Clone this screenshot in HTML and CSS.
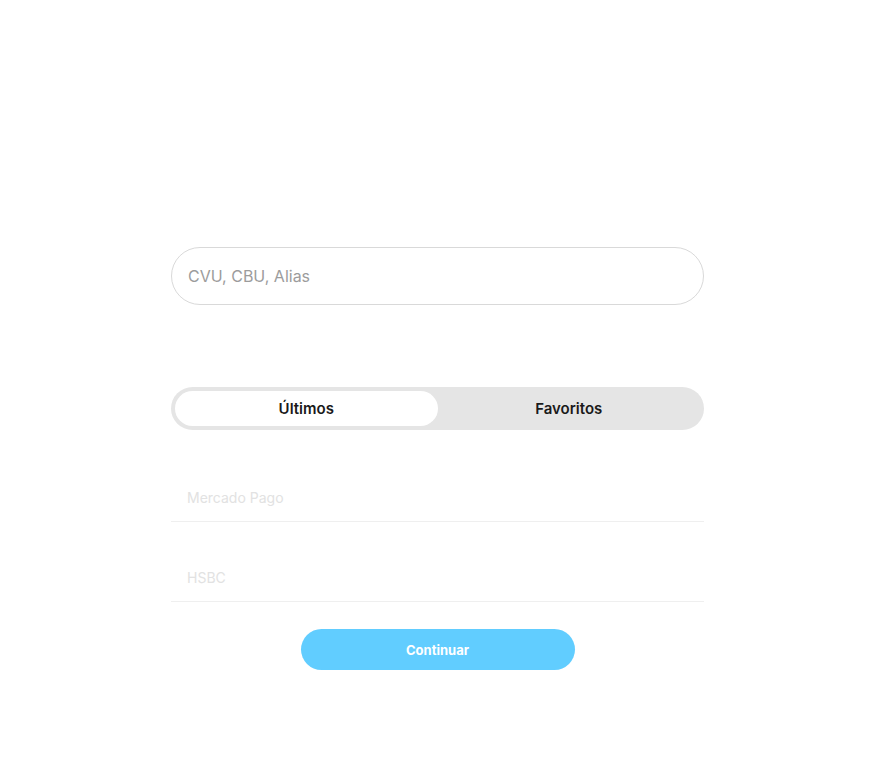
FILE: index.html
```html
<!DOCTYPE html>
<html lang="es">
<head>
<meta charset="utf-8">
<title>Transferir</title>
<link rel="stylesheet" href="styles.css">
</head>
<body>
<main class="page">
  <div class="field">
    <input class="field-input" type="text" placeholder="CVU, CBU, Alias">
  </div>
  <div class="segmented">
    <button class="seg seg-active">Últimos</button>
    <button class="seg">Favoritos</button>
  </div>
  <ul class="list">
    <li class="row">Mercado Pago</li>
    <li class="row">HSBC</li>
  </ul>
  <div class="actions">
    <button class="primary">Continuar</button>
  </div>
</main>
</body>
</html>
```
FILE: styles.css
```css
* { box-sizing: border-box; }
html, body { margin: 0; padding: 0; background: #fff; }
body { font-family: Inter, "Noto Sans", "Liberation Sans", sans-serif; }
.page {
  width: 533px;
  margin: 0 auto;
  padding-top: 247px;
  display: flex;
  flex-direction: column;
}
.field { height: 58px; }
.field-input {
  display: block;
  width: 100%;
  height: 58px;
  border: 1px solid #d9d9d9;
  border-radius: 29px;
  padding: 0 16px;
  font-family: inherit;
  font-size: 16px;
  color: #333;
  outline: none;
  background: #fff;
}
.field-input::placeholder { color: #9c9c9c; }
.segmented {
  margin-top: 82px;
  height: 43px;
  background: #e5e5e5;
  border-radius: 22px;
  padding: 4px;
  display: flex;
}
.seg {
  flex: 1;
  border: none;
  background: transparent;
  border-radius: 18px;
  font-family: inherit;
  font-size: 15px;
  font-weight: 600;
  color: #1a1a1a;
  padding: 0;
  cursor: pointer;
}
.seg-active { background: #fff; }
.list {
  list-style: none;
  margin: 12px 0 0;
  padding: 0;
}
.row {
  height: 80px;
  padding: 47px 16px 0;
  border-bottom: 1px solid #efefef;
  font-size: 14px;
  line-height: 18px;
  color: #e2e2e2;
}
.actions {
  margin-top: 27px;
  display: flex;
  justify-content: center;
}
.primary {
  width: 274px;
  height: 41px;
  border: none;
  border-radius: 21px;
  background: #61cdff;
  color: #fff;
  font-family: inherit;
  font-size: 13px;
  font-weight: 700;
  cursor: pointer;
}
```
